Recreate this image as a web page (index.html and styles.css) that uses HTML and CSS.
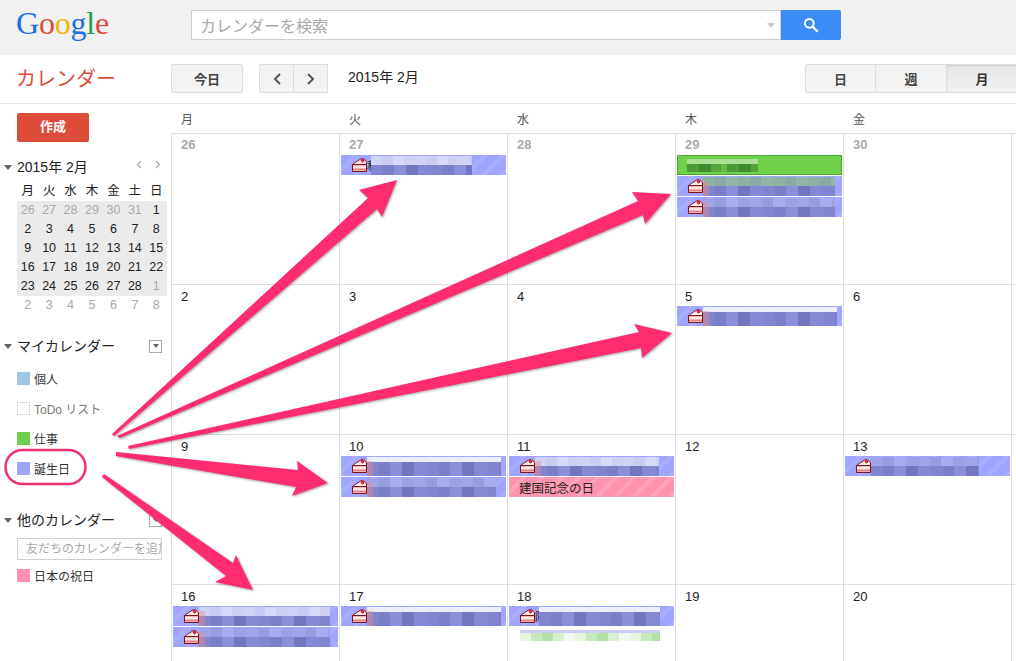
FILE: index.html
```html
<!DOCTYPE html>
<html lang="ja">
<head>
<meta charset="utf-8">
<title>Google カレンダー</title>
<link rel="stylesheet" href="styles.css">
</head>
<body>
<svg class="defs" width="0" height="0" aria-hidden="true">
  <symbol id="cake" viewBox="0 0 15 14">
    <path d="M.5 6.500 9 .8h2.500l3 3v9.700H.5z" fill="#f6b9b4" stroke="#7a1420"/>
    <path d="M1 6.500h13V4L11 1.200H9.500z" fill="#fdeee9"/>
    <path d="M.5 6.500h14" stroke="#7a1420"/>
    <path d="M1 9h13" stroke="#fff" stroke-width="1.200"/>
    <path d="M1 11.500h13" stroke="#e5807c" stroke-width="1.200"/>
    <circle cx="10.500" cy="2.600" r="1.800" fill="#d9283c"/>
  </symbol>
</svg>

<header class="topbar">
  <div class="logo"><span class="c-b">G</span><span class="c-r">o</span><span class="c-y">o</span><span class="c-b">g</span><span class="c-g">l</span><span class="c-r">e</span></div>
  <div class="search">
    <div class="search-box"><span class="search-text">カレンダーを検索</span><span class="search-caret"></span></div>
    <div class="search-btn">
      <svg width="16" height="16" viewBox="0 0 16 16"><circle cx="6.300" cy="6.300" r="4.400" fill="none" stroke="#fff" stroke-width="2"/><path d="m9.600 9.600 5.200 5.200" stroke="#fff" stroke-width="2.200"/></svg>
    </div>
  </div>
</header>

<div class="toolbar">
  <div class="app-name">カレンダー</div>
  <div class="btn today">今日</div>
  <div class="btn-group nav">
    <div class="btn"><svg width="10" height="14" viewBox="0 0 10 14"><path d="M8 2 3 7l5 5" fill="none" stroke="#555" stroke-width="2"/></svg></div>
    <div class="btn"><svg width="10" height="14" viewBox="0 0 10 14"><path d="m2 2 5 5-5 5" fill="none" stroke="#555" stroke-width="2"/></svg></div>
  </div>
  <div class="range">2015年 2月</div>
  <div class="btn-group views">
    <div class="btn">日</div>
    <div class="btn">週</div>
    <div class="btn active">月</div>
  </div>
</div>

<div class="layout">
  <aside class="sidebar">
    <div class="create">作成</div>

    <div class="mini-head">
      <span class="tri"></span><span class="sec-title">2015年 2月</span>
      <span class="mini-nav">
        <svg width="6" height="9" viewBox="0 0 6 9"><path d="M5 1 1.500 4.500 5 8" fill="none" stroke="#aaa" stroke-width="1.200"/></svg>
        <svg width="6" height="9" viewBox="0 0 6 9"><path d="m1 1 3.500 3.500L1 8" fill="none" stroke="#aaa" stroke-width="1.200"/></svg>
      </span>
    </div>
    <div class="mini-cal">
      <span>月</span><span>火</span><span>水</span><span>木</span><span>金</span><span>土</span><span>日</span>
      <span class="sh dim">26</span><span class="sh dim">27</span><span class="sh dim">28</span><span class="sh dim">29</span><span class="sh dim">30</span><span class="sh dim">31</span><span class="sh">1</span>
      <span class="sh">2</span><span class="sh">3</span><span class="sh">4</span><span class="sh">5</span><span class="sh">6</span><span class="sh">7</span><span class="sh">8</span>
      <span class="sh">9</span><span class="sh">10</span><span class="sh">11</span><span class="sh">12</span><span class="sh">13</span><span class="sh">14</span><span class="sh">15</span>
      <span class="sh">16</span><span class="sh">17</span><span class="sh">18</span><span class="sh">19</span><span class="sh">20</span><span class="sh">21</span><span class="sh">22</span>
      <span class="sh">23</span><span class="sh">24</span><span class="sh">25</span><span class="sh">26</span><span class="sh">27</span><span class="sh">28</span><span class="sh dim">1</span>
      <span class="dim">2</span><span class="dim">3</span><span class="dim">4</span><span class="dim">5</span><span class="dim">6</span><span class="dim">7</span><span class="dim">8</span>
    </div>

    <div class="sec-head my">
      <span class="tri"></span><span class="sec-title">マイカレンダー</span><span class="menu-box"><span class="menu-caret"></span></span>
    </div>
    <ul class="cal-list first">
      <li><span class="swatch s-blue"></span>個人</li>
      <li class="muted"><span class="swatch s-none"></span>ToDo リスト</li>
      <li><span class="swatch s-green"></span>仕事</li>
      <li><span class="swatch s-violet"></span>誕生日</li>
    </ul>

    <div class="sec-head other">
      <span class="tri"></span><span class="sec-title">他のカレンダー</span><span class="menu-box"><span class="menu-caret"></span></span>
    </div>
    <input class="friend" type="text" placeholder="友だちのカレンダーを追加">
    <ul class="cal-list">
      <li><span class="swatch s-pink"></span>日本の祝日</li>
    </ul>
  </aside>

  <main class="cal">
    <div class="dow">月</div><div class="dow">火</div><div class="dow">水</div><div class="dow">木</div><div class="dow">金</div><div class="dow"></div>

    <div class="cell"><div class="num dim">26</div></div>
    <div class="cell"><div class="num dim">27</div>
      <div class="ev"><svg class="cake"><use href="#cake"/></svg><span class="stub">和</span><div class="mos w101"><i class="pale"></i><i class="dark"></i></div></div>
    </div>
    <div class="cell"><div class="num dim">28</div></div>
    <div class="cell"><div class="num dim">29</div>
      <div class="ev green"><div class="mos w71 gr"><i class="glight"></i><i class="gdark"></i></div></div>
      <div class="ev"><svg class="cake"><use href="#cake"/></svg><div class="mos w132 tint"><i class="sage"></i><i class="dark"></i></div></div>
      <div class="ev"><svg class="cake"><use href="#cake"/></svg><div class="mos w132 tint"><i class="mid"></i><i class="dark"></i></div></div>
    </div>
    <div class="cell"><div class="num dim">30</div></div>
    <div class="cell"></div>

    <div class="cell"><div class="num">2</div></div>
    <div class="cell"><div class="num">3</div></div>
    <div class="cell"><div class="num">4</div></div>
    <div class="cell"><div class="num">5</div>
      <div class="ev"><svg class="cake"><use href="#cake"/></svg><div class="mos w134 tint"><i class="line"></i><i class="dark"></i></div></div>
    </div>
    <div class="cell"><div class="num">6</div></div>
    <div class="cell"></div>

    <div class="cell"><div class="num">9</div></div>
    <div class="cell"><div class="num">10</div>
      <div class="ev"><svg class="cake"><use href="#cake"/></svg><div class="mos w134 tint"><i class="line"></i><i class="dark"></i></div></div>
      <div class="ev"><svg class="cake"><use href="#cake"/></svg><div class="mos w129 tint"><i class="mid"></i><i class="dark"></i></div></div>
    </div>
    <div class="cell"><div class="num">11</div>
      <div class="ev"><svg class="cake"><use href="#cake"/></svg><div class="mos w124 tint"><i class="pale"></i><i class="dark"></i></div></div>
      <div class="ev holiday">建国記念の日</div>
    </div>
    <div class="cell"><div class="num">12</div></div>
    <div class="cell"><div class="num">13</div>
      <div class="ev"><svg class="cake"><use href="#cake"/></svg><div class="mos w108"><i class="mid"></i><i class="dark"></i></div></div>
    </div>
    <div class="cell"></div>

    <div class="cell"><div class="num">16</div>
      <div class="ev"><svg class="cake"><use href="#cake"/></svg><div class="mos w131 tint"><i class="pale"></i><i class="dark"></i></div></div>
      <div class="ev"><svg class="cake"><use href="#cake"/></svg><div class="mos w131 tint"><i class="mid"></i><i class="dark"></i></div></div>
    </div>
    <div class="cell"><div class="num">17</div>
      <div class="ev"><svg class="cake"><use href="#cake"/></svg><div class="mos w134 tint"><i class="line"></i><i class="dark"></i></div></div>
    </div>
    <div class="cell"><div class="num">18</div>
      <div class="ev"><svg class="cake"><use href="#cake"/></svg><span class="stub">防</span><div class="mos w121"><i class="line"></i><i class="dark"></i></div></div>
      <div class="ghost"><i class="ghost-line"></i><i class="ghost-green"></i></div>
    </div>
    <div class="cell"><div class="num">19</div></div>
    <div class="cell"><div class="num">20</div></div>
    <div class="cell"></div>
  </main>
</div>

<svg class="annot" width="1016" height="661" viewBox="0 0 1016 661" aria-hidden="true">
  <rect class="ring" x="5.500" y="450" width="80" height="34" rx="17"/>
  <g class="arrows">
    <polygon points="112,434 368,198 359,190 397,180 382,217 377,209 114,436"/>
    <polygon points="117,436 638,201 632,192 671,194 645,224 643,215 120,438"/>
    <polygon points="128,446 639,332 634,324 672,333 642,358 641,348 129,449"/>
    <polygon points="116,452 298,470 297,461 328,483 292,496 296,487 116,456"/>
    <polygon points="104,474 233,563 236,555 253,590 215,582 226,576 102,477"/>
  </g>
</svg>
</body>
</html>
```
FILE: styles.css
```css
* { box-sizing: border-box; }
html, body { margin: 0; height: 100%; }
body {
  width: 1016px;
  height: 661px;
  overflow: hidden;
  position: relative;
  background: #fff;
  color: #222;
  font-family: "Liberation Sans", "Noto Sans CJK JP", sans-serif;
  font-size: 13px;
}
.defs { position: absolute; }

/* top bar */
.topbar {
  height: 55px;
  background: #f1f1f1;
  display: flex;
  align-items: flex-start;
  padding-left: 16px;
}
.logo {
  width: 175px;
  padding-top: 4px;
  font-family: "Liberation Serif", serif;
  font-size: 32px;
  line-height: 38px;
  letter-spacing: -0.2px;
}
.c-b { color: #1a6ee8; }
.c-r { color: #dd4b39; }
.c-y { color: #f4b400; }
.c-g { color: #1e9e4a; }
.search { display: flex; margin-top: 10px; height: 30px; }
.search-box {
  width: 590px;
  background: #fff;
  border: 1px solid #d0d0d0;
  display: flex;
  align-items: center;
  justify-content: space-between;
  padding: 0 5px 0 8px;
}
.search-text { font-size: 16px; color: #aaa; }
.search-caret {
  border: 4px solid transparent;
  border-top: 5px solid #ccc;
  border-bottom: 0;
}
.search-btn {
  width: 60px;
  background: #3b8cf6;
  border-radius: 0 2px 2px 0;
  display: flex;
  align-items: center;
  justify-content: center;
}

/* toolbar */
.toolbar {
  height: 49px;
  border-bottom: 1px solid #e5e5e5;
  display: flex;
  align-items: flex-start;
  padding: 9px 0 0 16px;
}
.app-name {
  width: 155px;
  flex: none;
  color: #dd4b39;
  font-size: 20px;
  line-height: 31px;
}
.btn {
  height: 29px;
  background: #f3f3f3;
  border: 1px solid #dcdcdc;
  border-radius: 2px;
  color: #444;
  font-weight: bold;
  font-size: 13px;
  display: flex;
  align-items: center;
  justify-content: center;
}
.today { width: 72px; margin-right: 16px; flex: none; }
.btn-group { display: flex; flex: none; }
.btn-group .btn { border-radius: 0; }
.btn-group .btn + .btn { border-left: 0; }
.btn-group .btn:first-child { border-radius: 2px 0 0 2px; }
.nav .btn { width: 35px; }
.nav .btn + .btn { width: 34px; }
.range { font-size: 14px; margin-left: 20px; width: 457px; flex: none; line-height: 27px; }
.views .btn { width: 71px; flex: none; }
.views .active { background: linear-gradient(#e6e6e6, #f1f1f1); color: #333; box-shadow: inset 0 1px 2px rgba(0,0,0,.1); }

.layout { display: flex; }

/* sidebar */
.sidebar { width: 171px; flex: none; padding-left: 17px; }
.create {
  margin-top: 9px;
  width: 72px;
  height: 29px;
  background: #dd4b39;
  border-radius: 2px;
  color: #fff;
  font-weight: bold;
  font-size: 13px;
  text-align: center;
  line-height: 28px;
}
.tri {
  position: absolute;
  left: -13px;
  top: 6px;
  border: 4px solid transparent;
  border-top: 5px solid #666;
  border-bottom: 0;
}
.sec-title { font-size: 14px; line-height: 16px; color: #222; }
.mini-head { position: relative; margin-top: 17px; height: 16px; width: 150px; display: flex; }
.mini-nav {
  margin-left: auto;
  margin-right: 6px;
  display: flex;
  gap: 13px;
  height: 11px;
  align-items: center;
}
.mini-cal {
  margin-top: 7px;
  width: 150px;
  display: grid;
  grid-template-columns: repeat(7, 1fr);
  grid-auto-rows: 19px;
  font-size: 12.500px;
  text-align: center;
  line-height: 19px;
  color: #222;
}
.mini-cal .sh { background: #ebebeb; }
.mini-cal .dim { color: #a8a8a8; }
.sec-head { position: relative; height: 16px; width: 145px; display: flex; align-items: center; }
.sec-head.my { margin-top: 23px; }
.sec-head.other { margin-top: 29px; }
.menu-box {
  margin-left: auto;
  width: 13px;
  height: 13px;
  border: 1px solid #aaa;
  background: #fff;
  display: flex;
  align-items: center;
  justify-content: center;
}
.menu-caret {
  border: 3.500px solid transparent;
  border-top: 4px solid #666;
  border-bottom: 0;
}
.cal-list { list-style: none; margin: 0; padding: 0; font-size: 12px; color: #333; }
.cal-list.first { margin-top: 9px; }
.cal-list li { height: 30px; display: flex; align-items: center; }
.cal-list .muted { color: #777; }
.swatch { width: 13px; height: 13px; margin-right: 4px; flex: none; }
.s-blue { background: #9fc6e7; }
.s-none { background: #fff; border: 1px solid #ddd; }
.s-green { background: #6fcf4a; }
.s-violet { background: #9fa4fb; }
.s-pink { background: #ff92ae; }
.friend {
  display: block;
  margin-top: 10px;
  width: 145px;
  height: 22px;
  border: 1px solid #d0d0d0;
  padding: 0 0 0 8px;
  font: 12px "Liberation Sans", "Noto Sans CJK JP", sans-serif;
  background: #fff;
}
.friend::placeholder { color: #aaa; opacity: 1; }

/* month grid */
.cal {
  flex: 1;
  display: grid;
  grid-template-columns: repeat(5, 168px) 1fr;
  grid-template-rows: 30px 151px 150px 150px 90px;
}
.dow {
  padding: 8px 0 0 10px;
  font-size: 12px;
  line-height: 16px;
  color: #555;
  border-bottom: 1px solid #ddd;
}
.cell {
  border-left: 1px solid #ddd;
  border-bottom: 1px solid #ddd;
  padding: 4px 1px 0;
  display: flex;
  flex-direction: column;
  gap: 1px;
}
.num {
  height: 16px;
  padding-left: 8px;
  font-size: 13px;
  line-height: 16px;
  color: #222;
}
.num.dim { color: #aaa; font-weight: bold; line-height: 14px; }
.ev {
  width: 165px;
  height: 20px;
  flex: none;
  display: flex;
  align-items: center;
  padding-left: 11px;
  background: repeating-linear-gradient(135deg, #9fa4ff 0 9px, #a9adff 9px 13px);
}
.cake { width: 15px; height: 14px; flex: none; }
.stub { font-size: 11px; width: 12px; margin-right: -8px; color: #222; flex: none; }
.ev.green {
  background: #6fd04a;
  border: 1px solid #4ea62f;
  padding-left: 9px;
}
.ev.holiday {
  background: repeating-linear-gradient(135deg, #ff92ae 0 9px, #ffa2ba 9px 13px);
  font-size: 12.500px;
  color: #222;
  padding-left: 10px;
}

/* pixelated (redacted) event titles */
.mos {
  position: relative;
  height: 19px;
  flex: none;
  display: flex;
  flex-direction: column;
}
.mos i { display: block; flex: 1; }
.mos.gr { height: 13px; }
.w71 { width: 71px; }
.w101 { width: 101px; }
.w108 { width: 108px; }
.w121 { width: 121px; }
.w124 { width: 124px; }
.w129 { width: 129px; }
.w131 { width: 131px; }
.w132 { width: 132px; }
.w134 { width: 134px; }
.tint::before {
  content: "";
  position: absolute;
  left: 0;
  top: 4px;
  bottom: 0;
  width: 6px;
  background: rgba(235, 140, 140, .45);
}
.pale { background: repeating-linear-gradient(90deg, #d0d3f6 0 11px, #c8cbf3 11px 22px, #d6d9f9 22px 33px, #cdd0f4 33px 44px); }
.dark { background: repeating-linear-gradient(90deg, #8184cf 0 12px, #7b7fc9 12px 23px, #8a8edb 23px 35px, #7376bf 35px 47px, #8588d4 47px 60px); }
.mid { background: repeating-linear-gradient(90deg, #a0a5eb 0 12px, #979ce0 12px 23px, #a6abf2 23px 35px, #9ca1e6 35px 47px); }
.sage { background: repeating-linear-gradient(90deg, #8fb0a4 0 12px, #8ba8a6 12px 23px, #94b4aa 23px 35px); }
.mos i.line { flex: 0 0 5px; background: #eceefb; }
.mos i.glight { flex: 0 0 5px; background: #abdf92; }
.gdark { background: repeating-linear-gradient(90deg, #4b9a36 0 12px, #3f8a2e 12px 24px, #55a53c 24px 34px, #62bb42 34px 40px); }
.ghost { margin: 3px 0 0 11px; width: 140px; height: 11px; display: flex; flex-direction: column; }
.ghost-line { display: block; height: 3px; background: #cdcdf2; }
.ghost-green { display: block; flex: 1; background: repeating-linear-gradient(90deg, #e6f5df 0 11px, #c8e9c0 11px 22px, #b4e0a8 22px 33px, #d8f0d0 33px 44px, #f2faef 44px 55px); }

/* annotation overlay */
.annot { position: absolute; left: 0; top: 0; pointer-events: none; }
.arrows { fill: #ff2d6f; filter: drop-shadow(1px 1px 1px rgba(0,0,0,.35)); }
.ring { fill: none; stroke: #f0306f; stroke-width: 2.500; }
```
